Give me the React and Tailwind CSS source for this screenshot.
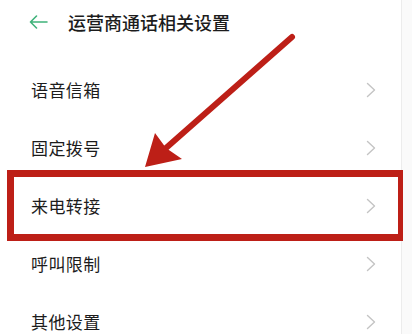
import { Fragment } from "react";

const items = ["语音信箱", "固定拨号", "来电转接", "呼叫限制", "其他设置"];

export default function App() {
    return (
        <div
            className="relative w-[412px] h-[334px] overflow-hidden bg-[#fafafa] flex"
            style={{ fontFamily: '"Noto Sans CJK SC", "Noto Sans", sans-serif' }}
        >
            <div className="w-[402px] shrink-0 bg-white border-r border-[#ececec]">
                {/* HEADER */}
                <div className="h-[61px] flex items-start pt-[10px] pl-[29px]">
                    <svg width="19" height="14" viewBox="0 0 19 14" className="mt-[5px]">
                        <path
                            d="M18 7H1.5M7.5 1L1.5 7l6 6"
                            fill="none"
                            stroke="#3fb27a"
                            strokeWidth="1.6"
                            strokeLinecap="round"
                            strokeLinejoin="round"
                        />
                    </svg>
                    <h1 className="ml-[20px] text-[18px] leading-[24px] font-medium text-[#1c1c1c]">
                        运营商通话相关设置
                    </h1>
                </div>

                {/* LIST */}
                {items.map((label) => (
                    <Row key={label} label={label} />
                ))}
            </div>

            {/* ANNOTATION */}
            <div className="absolute left-[7px] top-[170px] w-[396px] h-[71px] border-[7px] border-r-[5px] border-[#bd1f17]" />
            <svg className="absolute left-0 top-0" width="412" height="334" viewBox="0 0 412 334">
                <line
                    x1="292"
                    y1="37"
                    x2="166"
                    y2="148"
                    stroke="#bd1f17"
                    strokeWidth="6"
                    strokeLinecap="round"
                />
                <polygon points="145,167 155,133 166,148 182,159" fill="#bd1f17" />
            </svg>
        </div>
    );
}

function Row({ label }) {
    return (
        <div className="h-[58px] flex items-center justify-between pl-[31px] pr-[25px]">
            <span className="text-[17px] text-[#1c1c1c] tracking-[0.4px]">{label}</span>
            <svg width="10" height="16" viewBox="0 0 10 16">
                <path
                    d="M1.5 1.5L8.5 8l-7 6.5"
                    fill="none"
                    stroke="#c4c4c4"
                    strokeWidth="1.4"
                    strokeLinecap="round"
                    strokeLinejoin="round"
                />
            </svg>
        </div>
    );
}
